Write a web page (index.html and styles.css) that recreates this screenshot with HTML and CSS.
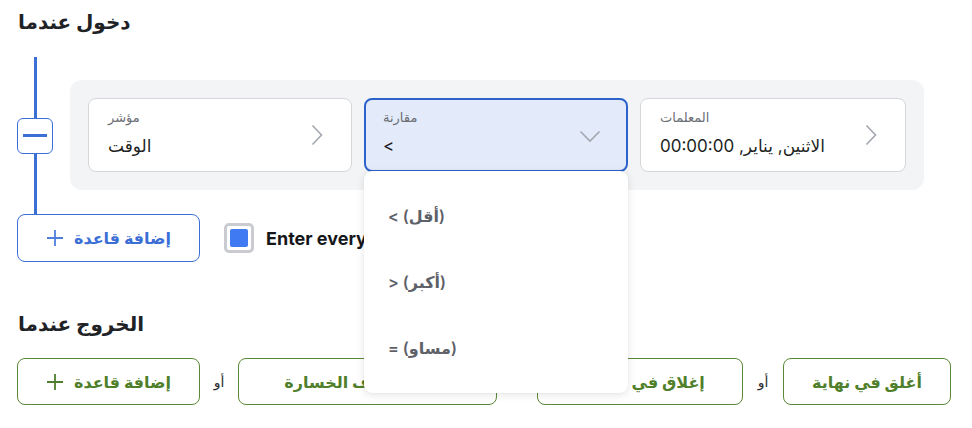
FILE: index.html
```html
<!DOCTYPE html>
<html lang="ar">
<head>
<meta charset="utf-8">
<link rel="stylesheet" href="styles.css">
</head>
<body>
<div class="page">
  <section class="entry">
    <h2 class="title">دخول عندما</h2>
    <div class="rule-row">
      <div class="connector">
        <span class="line"></span>
        <button class="minus" aria-label="remove"><span></span></button>
        <span class="line"></span>
      </div>
      <div class="panel">
        <div class="card">
          <div class="card-text">
            <div class="label">مؤشر</div>
            <div class="value">الوقت</div>
          </div>
          <svg class="chev-right" width="12" height="22" viewBox="0 0 12 22"><path d="M1.5 1.5 L10.5 11 L1.5 20.5" fill="none" stroke="#a3a7af" stroke-width="1.6"/></svg>
        </div>
        <div class="card card-active">
          <div class="card-text">
            <div class="label">مقارنة</div>
            <div class="value">&lt;</div>
          </div>
          <svg class="chev-down" width="22" height="13" viewBox="0 0 22 13"><path d="M1.5 1.5 L11 11 L20.5 1.5" fill="none" stroke="#a3a7af" stroke-width="1.6"/></svg>
          <div class="dropdown">
            <div class="item">&lt; (أقل)</div>
            <div class="item">&gt; (أكبر)</div>
            <div class="item">= (مساو)</div>
          </div>
        </div>
        <div class="card">
          <div class="card-text">
            <div class="label">المعلمات</div>
            <div class="value" dir="ltr">00:00:00 ,<bdi>يناير</bdi> ,<bdi>الاثنين</bdi></div>
          </div>
          <svg class="chev-right" width="12" height="22" viewBox="0 0 12 22"><path d="M1.5 1.5 L10.5 11 L1.5 20.5" fill="none" stroke="#a3a7af" stroke-width="1.6"/></svg>
        </div>
      </div>
    </div>
    <div class="actions">
      <button class="add-btn add-blue"><svg width="18" height="18" viewBox="0 0 18 18"><path d="M9 1 V17 M1 9 H17" stroke="currentColor" stroke-width="1.8"/></svg><span>إضافة قاعدة</span></button>
      <label class="check">
        <span class="box"><span class="fill"></span></span>
        <span class="check-text">Enter every time conditions are met</span>
      </label>
    </div>
  </section>

  <section class="exit">
    <h2 class="title">الخروج عندما</h2>
    <div class="exit-row">
      <button class="add-btn add-green w1"><svg width="18" height="18" viewBox="0 0 18 18"><path d="M9 1 V17 M1 9 H17" stroke="currentColor" stroke-width="1.8"/></svg><span>إضافة قاعدة</span></button>
      <span class="or">أو</span>
      <button class="green-btn w2">تفعيل إيقاف الخسارة</button>
      <span class="or">أو</span>
      <button class="green-btn w3">إغلاق في خسارة</button>
      <span class="or">أو</span>
      <button class="green-btn w4">أغلق في نهاية</button>
    </div>
  </section>
</div>
</body>
</html>
```

FILE: styles.css
```css
* { box-sizing: border-box; }
html, body { margin: 0; padding: 0; background: #ffffff; }
body {
  font-family: "Inter", "Noto Sans", "DejaVu Sans", sans-serif;
  color: #1f2125;
}
.page {
  padding: 8px 0 0 17px;
  width: 972px;
  height: 428px;
  overflow: hidden;
}
.title {
  margin: 0;
  font-size: 20px;
  font-weight: 700;
  line-height: 28px;
  color: #202226;
  padding-left: 1px;
}
.rule-row {
  display: flex;
  gap: 17px;
  margin-top: 21px;
}
.connector {
  width: 36px;
  height: 157px;
  display: flex;
  flex-direction: column;
  align-items: center;
}
.line {
  flex: 1;
  width: 3px;
  background: #3b6fd6;
}
.minus {
  width: 36px;
  height: 36px;
  border: 1px solid #3b6fd6;
  border-radius: 6px;
  background: #fff;
  padding: 0;
  display: flex;
  align-items: center;
  justify-content: center;
}
.minus span {
  width: 24px;
  height: 3px;
  background: #3b6fd6;
  display: block;
}
.panel {
  margin-top: 23px;
  width: 854px;
  height: 110px;
  background: #f3f4f6;
  border-radius: 12px;
  padding: 18px;
  display: flex;
  gap: 12px;
}
.card {
  position: relative;
  width: 264px;
  height: 74px;
  background: #ffffff;
  border: 1px solid #d4d6da;
  border-radius: 8px;
  display: flex;
  align-items: center;
  justify-content: space-between;
  padding: 0 28px 0 19px;
}
.card:last-child { width: 266px; padding-right: 28px; }
.card-active {
  background: #e3ebfa;
  border: 2px solid #2d62cb;
  padding: 0 25px 0 17px;
}
.card-text { display: flex; flex-direction: column; }
.label {
  font-size: 13px;
  color: #6b6e74;
  line-height: 18px;
  margin-top: -4px;
}
.value {
  font-size: 17px;
  color: #1d1f23;
  line-height: 24px;
  margin-top: 8px;
  white-space: nowrap;
}
.chev-right { display: block; }
.chev-down { display: block; margin-top: 2px; }
.dropdown {
  position: absolute;
  left: -2px;
  top: calc(100% + 1px);
  width: 264px;
  height: 222px;
  background: #ffffff;
  border-radius: 8px;
  box-shadow: 0 2px 8px rgba(0,0,0,0.10), 0 0 1px rgba(0,0,0,0.12);
  padding: 12px 0;
  z-index: 5;
}
.item {
  height: 66px;
  display: flex;
  align-items: center;
  padding-left: 24px;
  font-size: 16px;
  font-weight: 600;
  color: #5e6168;
}
.actions {
  display: flex;
  align-items: center;
  gap: 24px;
}
.add-btn {
  display: flex;
  align-items: center;
  justify-content: center;
  gap: 10px;
  background: #fff;
  border-radius: 8px;
  font-family: inherit;
  font-size: 16px;
  font-weight: 700;
}
.add-blue {
  width: 183px;
  height: 48px;
  border: 1px solid #3b6fd6;
  color: #3b6fd6;
}
.add-blue svg { color: #4f7fdc; }
.check {
  display: flex;
  align-items: center;
  gap: 12px;
}
.box {
  width: 30px;
  height: 30px;
  border: 3px solid #c9cbd0;
  border-radius: 5px;
  display: flex;
  align-items: center;
  justify-content: center;
}
.fill {
  width: 18px;
  height: 18px;
  background: #3f7af2;
  border-radius: 2px;
}
.check-text {
  font-size: 18px;
  font-weight: 700;
  color: #15171a;
  white-space: nowrap;
}
.exit { margin-top: 48px; }
.exit-row {
  margin-top: 20px;
  display: flex;
  align-items: center;
  gap: 12px;
}
.add-green, .green-btn {
  height: 47px;
  border: 1px solid #5a8a35;
  color: #4f7f2a;
  background: #fff;
  border-radius: 8px;
  font-family: inherit;
  font-size: 16px;
  font-weight: 700;
  white-space: nowrap;
}
.green-btn { padding: 0 20px; }
.w1 { width: 183px; }
.w2 { width: 259px; }
.w3 { width: 206px; }
.w4 { width: 168px; }
.or {
  font-size: 14px;
  color: #2a2c30;
  width: 14px;
  text-align: center;
}
.exit-row .w2 ~ .or { width: 16px; }
```
